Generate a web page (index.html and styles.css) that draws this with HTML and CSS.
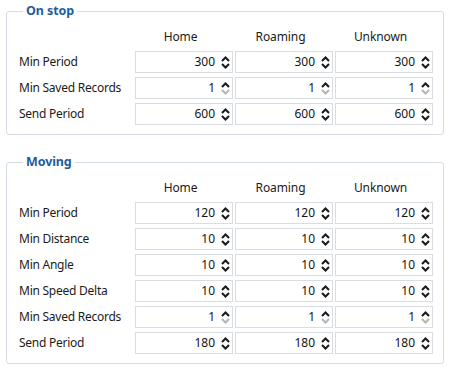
FILE: index.html
```html
<!DOCTYPE html>
<html>
<head>
<meta charset="utf-8">
<link rel="stylesheet" href="styles.css">
</head>
<body>
<fieldset class="group">
  <legend>On stop</legend>
  <div class="grid">
    <div></div><div class="head">Home</div><div class="head">Roaming</div><div class="head">Unknown</div>

    <div class="label">Min Period</div>
    <div class="box"><span class="val">300</span><svg class="sp" viewBox="0 0 9 13"><polyline points="1,5 4.5,1.5 8,5"/><polyline points="1,8 4.5,11.5 8,8"/></svg></div>
    <div class="box"><span class="val">300</span><svg class="sp" viewBox="0 0 9 13"><polyline points="1,5 4.5,1.5 8,5"/><polyline points="1,8 4.5,11.5 8,8"/></svg></div>
    <div class="box"><span class="val">300</span><svg class="sp" viewBox="0 0 9 13"><polyline points="1,5 4.5,1.5 8,5"/><polyline points="1,8 4.5,11.5 8,8"/></svg></div>

    <div class="label">Min Saved Records</div>
    <div class="box"><span class="val">1</span><svg class="sp" viewBox="0 0 9 13"><polyline points="1,5 4.5,1.5 8,5"/><polyline class="dis" points="1,8 4.5,11.5 8,8"/></svg></div>
    <div class="box"><span class="val">1</span><svg class="sp" viewBox="0 0 9 13"><polyline points="1,5 4.5,1.5 8,5"/><polyline class="dis" points="1,8 4.5,11.5 8,8"/></svg></div>
    <div class="box"><span class="val">1</span><svg class="sp" viewBox="0 0 9 13"><polyline points="1,5 4.5,1.5 8,5"/><polyline class="dis" points="1,8 4.5,11.5 8,8"/></svg></div>

    <div class="label">Send Period</div>
    <div class="box"><span class="val">600</span><svg class="sp" viewBox="0 0 9 13"><polyline points="1,5 4.5,1.5 8,5"/><polyline points="1,8 4.5,11.5 8,8"/></svg></div>
    <div class="box"><span class="val">600</span><svg class="sp" viewBox="0 0 9 13"><polyline points="1,5 4.5,1.5 8,5"/><polyline points="1,8 4.5,11.5 8,8"/></svg></div>
    <div class="box"><span class="val">600</span><svg class="sp" viewBox="0 0 9 13"><polyline points="1,5 4.5,1.5 8,5"/><polyline points="1,8 4.5,11.5 8,8"/></svg></div>
  </div>
</fieldset>

<fieldset class="group second">
  <legend>Moving</legend>
  <div class="grid">
    <div></div><div class="head">Home</div><div class="head">Roaming</div><div class="head">Unknown</div>

    <div class="label">Min Period</div>
    <div class="box"><span class="val">120</span><svg class="sp" viewBox="0 0 9 13"><polyline points="1,5 4.5,1.5 8,5"/><polyline points="1,8 4.5,11.5 8,8"/></svg></div>
    <div class="box"><span class="val">120</span><svg class="sp" viewBox="0 0 9 13"><polyline points="1,5 4.5,1.5 8,5"/><polyline points="1,8 4.5,11.5 8,8"/></svg></div>
    <div class="box"><span class="val">120</span><svg class="sp" viewBox="0 0 9 13"><polyline points="1,5 4.5,1.5 8,5"/><polyline points="1,8 4.5,11.5 8,8"/></svg></div>

    <div class="label">Min Distance</div>
    <div class="box"><span class="val">10</span><svg class="sp" viewBox="0 0 9 13"><polyline points="1,5 4.5,1.5 8,5"/><polyline points="1,8 4.5,11.5 8,8"/></svg></div>
    <div class="box"><span class="val">10</span><svg class="sp" viewBox="0 0 9 13"><polyline points="1,5 4.5,1.5 8,5"/><polyline points="1,8 4.5,11.5 8,8"/></svg></div>
    <div class="box"><span class="val">10</span><svg class="sp" viewBox="0 0 9 13"><polyline points="1,5 4.5,1.5 8,5"/><polyline points="1,8 4.5,11.5 8,8"/></svg></div>

    <div class="label">Min Angle</div>
    <div class="box"><span class="val">10</span><svg class="sp" viewBox="0 0 9 13"><polyline points="1,5 4.5,1.5 8,5"/><polyline points="1,8 4.5,11.5 8,8"/></svg></div>
    <div class="box"><span class="val">10</span><svg class="sp" viewBox="0 0 9 13"><polyline points="1,5 4.5,1.5 8,5"/><polyline points="1,8 4.5,11.5 8,8"/></svg></div>
    <div class="box"><span class="val">10</span><svg class="sp" viewBox="0 0 9 13"><polyline points="1,5 4.5,1.5 8,5"/><polyline points="1,8 4.5,11.5 8,8"/></svg></div>

    <div class="label">Min Speed Delta</div>
    <div class="box"><span class="val">10</span><svg class="sp" viewBox="0 0 9 13"><polyline points="1,5 4.5,1.5 8,5"/><polyline points="1,8 4.5,11.5 8,8"/></svg></div>
    <div class="box"><span class="val">10</span><svg class="sp" viewBox="0 0 9 13"><polyline points="1,5 4.5,1.5 8,5"/><polyline points="1,8 4.5,11.5 8,8"/></svg></div>
    <div class="box"><span class="val">10</span><svg class="sp" viewBox="0 0 9 13"><polyline points="1,5 4.5,1.5 8,5"/><polyline points="1,8 4.5,11.5 8,8"/></svg></div>

    <div class="label">Min Saved Records</div>
    <div class="box"><span class="val">1</span><svg class="sp" viewBox="0 0 9 13"><polyline points="1,5 4.5,1.5 8,5"/><polyline class="dis" points="1,8 4.5,11.5 8,8"/></svg></div>
    <div class="box"><span class="val">1</span><svg class="sp" viewBox="0 0 9 13"><polyline points="1,5 4.5,1.5 8,5"/><polyline class="dis" points="1,8 4.5,11.5 8,8"/></svg></div>
    <div class="box"><span class="val">1</span><svg class="sp" viewBox="0 0 9 13"><polyline points="1,5 4.5,1.5 8,5"/><polyline class="dis" points="1,8 4.5,11.5 8,8"/></svg></div>

    <div class="label">Send Period</div>
    <div class="box"><span class="val">180</span><svg class="sp" viewBox="0 0 9 13"><polyline points="1,5 4.5,1.5 8,5"/><polyline points="1,8 4.5,11.5 8,8"/></svg></div>
    <div class="box"><span class="val">180</span><svg class="sp" viewBox="0 0 9 13"><polyline points="1,5 4.5,1.5 8,5"/><polyline points="1,8 4.5,11.5 8,8"/></svg></div>
    <div class="box"><span class="val">180</span><svg class="sp" viewBox="0 0 9 13"><polyline points="1,5 4.5,1.5 8,5"/><polyline points="1,8 4.5,11.5 8,8"/></svg></div>
  </div>
</fieldset>
</body>
</html>
```

FILE: styles.css
```css
html, body {
  margin: 0;
  background: #ffffff;
}
body {
  padding: 3px 8px 0 6px;
  font-family: "Noto Sans", "Open Sans", sans-serif;
  font-size: 12px;
  color: #1b1b1b;
}
.group {
  margin: 0;
  padding: 10px 9px 9px 12px;
  border: 1px solid #d5dce4;
  border-radius: 3px;
  min-width: 0;
}
.group.second {
  margin-top: 19px;
}
.group legend {
  margin-left: 4px;
  padding: 0 3px;
  font-weight: bold;
  font-size: 12.5px;
  line-height: 16px;
  letter-spacing: -0.1px;
  color: #1d5d9c;
}
.grid {
  display: grid;
  grid-template-columns: 114px 98px 98px 98px;
  column-gap: 2px;
  row-gap: 4px;
}
.head {
  height: 16px;
  line-height: 16px;
  text-align: center;
  padding-right: 7px;
  margin-bottom: 2px;
  letter-spacing: -0.1px;
}
.label {
  height: 22px;
  line-height: 22px;
  white-space: nowrap;
  letter-spacing: -0.25px;
}
.box {
  box-sizing: border-box;
  height: 22px;
  border: 1px solid #d8dde3;
  background: #fff;
  display: flex;
  align-items: center;
  padding-right: 2px;
}
.val {
  flex: 1;
  text-align: right;
  line-height: 20px;
  color: #141414;
}
.sp {
  width: 9px;
  height: 13px;
  margin-left: 6px;
  flex: none;
}
.sp polyline {
  fill: none;
  stroke: #1a1a1a;
  stroke-width: 2;
}
.sp polyline.dis {
  stroke: #b4b4b4;
}
```
